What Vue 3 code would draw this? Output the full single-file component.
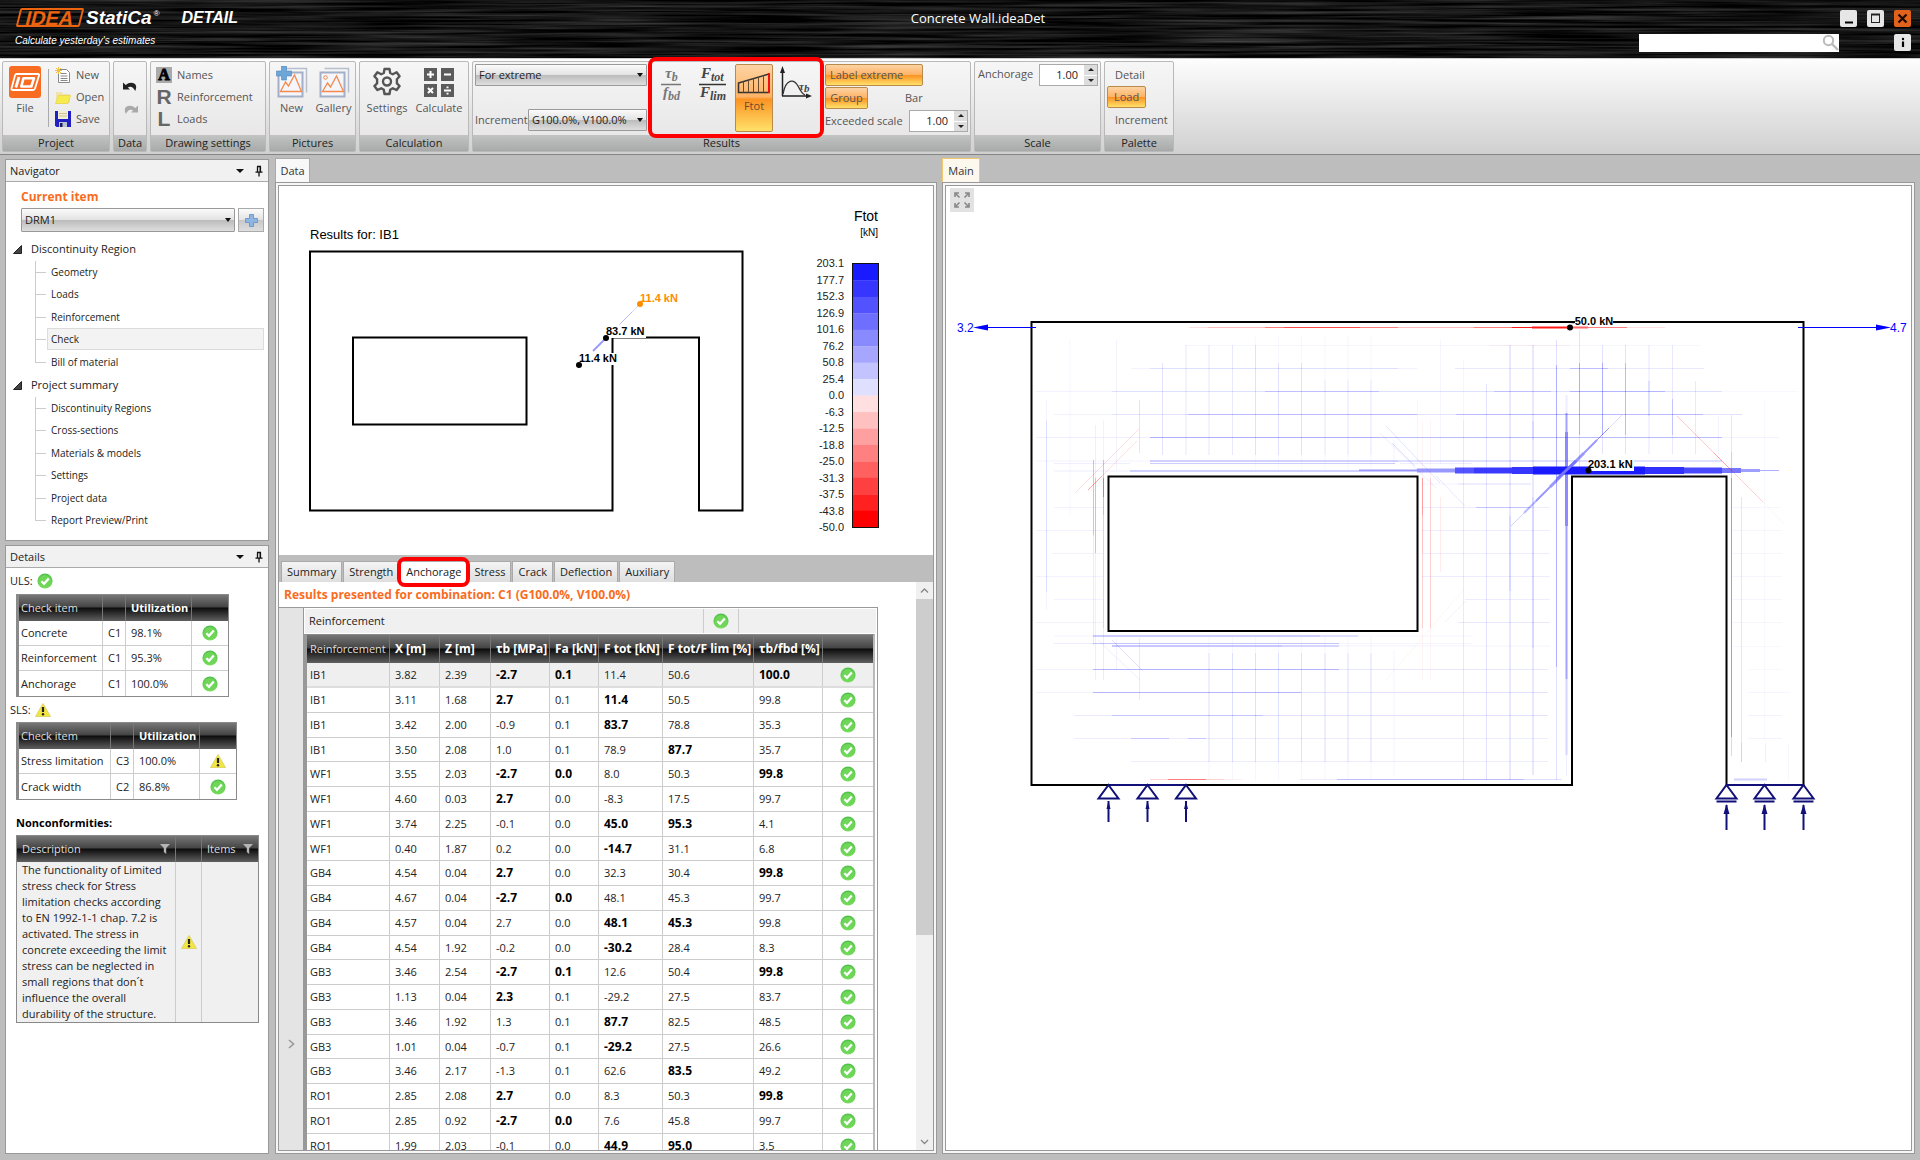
<script setup>
import { ref } from 'vue'

const member = ref('DRM1')
const extreme = ref('For extreme')
const increment = ref('G100.0%, V100.0%')

const tree = [
  { title: 'Discontinuity Region', items: ['Geometry', 'Loads', 'Reinforcement', 'Check', 'Bill of material'] },
  {
    title: 'Project summary',
    items: ['Discontinuity Regions', 'Cross-sections', 'Materials & models', 'Settings', 'Project data', 'Report Preview/Print']
  }
]

const uls = [
  ['Concrete', 'C1', '98.1%', 'ok'],
  ['Reinforcement', 'C1', '95.3%', 'ok'],
  ['Anchorage', 'C1', '100.0%', 'ok']
]
const sls = [
  ['Stress limitation', 'C3', '100.0%', 'warn'],
  ['Crack width', 'C2', '86.8%', 'ok']
]
const note = [
  'The functionality of Limited',
  'stress check for Stress',
  'limitation checks according',
  'to EN 1992-1-1 chap. 7.2 is',
  'activated. The stress in',
  'concrete exceeding the limit',
  'stress can be neglected in',
  'small regions that don´t',
  'influence the overall',
  'durability of the structure.'
].join('\n')

const tabs = ['Summary', 'Strength', 'Anchorage', 'Stress', 'Crack', 'Deflection', 'Auxiliary']

const columns = ['Reinforcement', 'X [m]', 'Z [m]', 'τb [MPa]', 'Fa [kN]', 'F tot [kN]', 'F tot/F lim [%]', 'τb/fbd [%]', '']

// A leading asterisk marks the extreme value of a bar group.
const rows = [
  'IB1 3.82 2.39 *-2.7 *0.1 11.4 50.6 *100.0',
  'IB1 3.11 1.68 *2.7 0.1 *11.4 50.5 99.8',
  'IB1 3.42 2.00 -0.9 0.1 *83.7 78.8 35.3',
  'IB1 3.50 2.08 1.0 0.1 78.9 *87.7 35.7',
  'WF1 3.55 2.03 *-2.7 *0.0 8.0 50.3 *99.8',
  'WF1 4.60 0.03 *2.7 0.0 -8.3 17.5 99.7',
  'WF1 3.74 2.25 -0.1 0.0 *45.0 *95.3 4.1',
  'WF1 0.40 1.87 0.2 0.0 *-14.7 31.1 6.8',
  'GB4 4.54 0.04 *2.7 0.0 32.3 30.4 *99.8',
  'GB4 4.67 0.04 *-2.7 *0.0 48.1 45.3 99.7',
  'GB4 4.57 0.04 2.7 0.0 *48.1 *45.3 99.8',
  'GB4 4.54 1.92 -0.2 0.0 *-30.2 28.4 8.3',
  'GB3 3.46 2.54 *-2.7 *0.1 12.6 50.4 *99.8',
  'GB3 1.13 0.04 *2.3 0.1 -29.2 27.5 83.7',
  'GB3 3.46 1.92 1.3 0.1 *87.7 82.5 48.5',
  'GB3 1.01 0.04 -0.7 0.1 *-29.2 27.5 26.6',
  'GB3 3.46 2.17 -1.3 0.1 62.6 *83.5 49.2',
  'RO1 2.85 2.08 *2.7 0.0 8.3 50.3 *99.8',
  'RO1 2.85 0.92 *-2.7 *0.0 7.6 45.8 99.7',
  'RO1 1.99 2.03 -0.1 0.0 *44.9 *95.0 3.5'
].map((line) => line.split(' ').map((v) => ({ text: v.replace('*', ''), bold: v[0] === '*' })))

const scale = ['203.1', '177.7', '152.3', '126.9', '101.6', '76.2', '50.8', '25.4', '0.0', '-6.3', '-12.5', '-18.8', '-25.0', '-31.3', '-37.5', '-43.8', '-50.0']
const shades = ['#1a1aff', '#3636ff', '#5252ff', '#6e6eff', '#8a8aff', '#a6a6ff', '#c3c3ff', '#dfdfff', '#ffdfdf', '#ffc0c0', '#ffa0a0', '#ff8080', '#ff6060', '#ff4040', '#ff2020', '#ff0000']

// Bars: [y, opacity, width, x1, x2]
const blueH = [
  [345.5, 0.04, 1, 1186, 1700],
  [368.5, 0.05, 1, 1131, 1150], [368.5, 0.14, 1, 1150, 1398], [368.5, 0.06, 1, 1398, 1417], [368.5, 0.1, 1, 1455, 1704], [368.5, 0.2, 1, 1570, 1608],
  [391.5, 0.05, 1, 1036, 1112], [391.5, 0.14, 1, 1112, 1722], [391.5, 0.16, 1, 1265, 1379], [391.5, 0.16, 1, 1494, 1551], [391.5, 0.22, 1, 1570, 1665], [391.5, 0.03, 1, 1722, 1798],
  [414.5, 0.06, 1, 1054, 1112], [414.5, 0.12, 1, 1112, 1742], [414.5, 0.2, 1, 1188, 1417], [414.5, 0.2, 1, 1456, 1703],
  [437.5, 0.07, 1, 1036, 1150], [437.5, 0.34, 1, 1150, 1379], [437.5, 0.3, 1, 1379, 1722], [437.5, 0.05, 1, 1722, 1779],
  [461, 0.06, 1, 1036, 1150], [461, 0.2, 2, 1150, 1398], [461, 0.14, 2, 1398, 1722],
  [463.5, 0.07, 1, 1054, 1130], [463.5, 0.22, 1, 1150, 1395], [463.5, 0.08, 1, 1400, 1472],
  [471, 0.08, 1, 1054, 1130], [471, 0.2, 2, 1130, 1359],
  [484, 0.15, 1, 1458, 1531], [484, 0.06, 1, 1422, 1458],
  [507.5, 0.05, 1, 1054, 1103], [507.5, 0.2, 1, 1476, 1530], [507.5, 0.08, 1, 1422, 1550], [507.5, 0.04, 1, 1732, 1780],
  [530.5, 0.06, 1, 1036, 1103], [530.5, 0.08, 1, 1422, 1550], [530.5, 0.04, 1, 1732, 1782],
  [553.5, 0.06, 1, 1052, 1103], [553.5, 0.08, 1, 1422, 1550], [553.5, 0.04, 1, 1732, 1782],
  [576.5, 0.05, 1, 1036, 1103], [576.5, 0.08, 1, 1422, 1550], [576.5, 0.04, 1, 1732, 1782],
  [599.5, 0.05, 1, 1054, 1103], [599.5, 0.08, 1, 1465, 1550], [599.5, 0.04, 1, 1732, 1782],
  [622.5, 0.06, 1, 1036, 1103], [622.5, 0.1, 1, 1458, 1550], [622.5, 0.04, 1, 1732, 1782],
  [636, 0.06, 1, 1054, 1093], [636, 0.22, 2, 1093, 1320], [636, 0.14, 2, 1320, 1358], [636, 0.04, 1, 1358, 1472],
  [643.5, 0.08, 1, 1054, 1093], [643.5, 0.26, 1, 1093, 1339], [643.5, 0.04, 1, 1339, 1472],
  [646, 0.24, 2, 1112, 1282], [646, 0.18, 2, 1282, 1339], [646, 0.06, 1, 1339, 1550],
  [669.5, 0.06, 1, 1036, 1093], [669.5, 0.32, 1, 1093, 1339], [669.5, 0.09, 1, 1339, 1548],
  [692.5, 0.06, 1, 1036, 1093], [692.5, 0.32, 1, 1093, 1301], [692.5, 0.12, 1, 1301, 1548],
  [715.5, 0.09, 1, 1074, 1112], [715.5, 0.26, 1, 1112, 1263], [715.5, 0.12, 1, 1263, 1548],
  [738.5, 0.08, 1, 1074, 1548], [738.5, 0.18, 1, 1131, 1169], [738.5, 0.18, 1, 1188, 1206],
  [761.5, 0.08, 1, 1131, 1548],
  [779.5, 0.08, 1, 1300, 1337], [779.5, 0.28, 1, 1337, 1524], [779.5, 0.14, 1, 1524, 1562], [779.5, 0.2, 2, 1734, 1767],
  [646.5, 0.03, 1, 1732, 1782], [669.5, 0.03, 1, 1748, 1782], [692.5, 0.04, 1, 1748, 1790], [715.5, 0.05, 1, 1748, 1782], [738.5, 0.05, 1, 1748, 1782]
]
// Bars: [x, opacity, width, y1, y2]
const blueV = [
  [1046.5, 0.1, 1, 421, 592], [1046.5, 0.05, 1, 400, 610],
  [1070, 0.04, 1, 340, 515],
  [1116.5, 0.05, 1, 340, 470], [1116.5, 0.06, 1, 638, 670],
  [1139.5, 0.12, 1, 400, 453], [1139.5, 0.09, 1, 638, 700],
  [1162.5, 0.12, 1, 363, 455],
  ...[1186, 1209, 1232.5, 1255.5].map((x) => [x, 0.1, 1, 345, 455]),
  ...[1278.5, 1301.5].map((x) => [x, 0.1, 1, 363, 455]),
  ...[1325, 1348, 1371].map((x) => [x, 0.08, 1, 380, 455]),
  ...[1255.5, 1278.5, 1301.5, 1325, 1348, 1371].map((x) => [x, 0.03, 1, 335, 470]),
  ...[1209, 1232.5, 1255.5, 1278.5, 1301.5, 1325, 1348, 1371].map((x) => [x, 0.1, 1, 653, 762]),
  ...[1209, 1232.5, 1255.5, 1278.5, 1301.5, 1325, 1348, 1371].map((x) => [x, 0.04, 1, 637, 780]),
  [1394, 0.06, 1, 650, 775], [1394, 0.06, 1, 440, 465],
  [1417.5, 0.04, 1, 400, 465],
  [1440.5, 0.04, 1, 340, 465],
  [1463.5, 0.1, 1, 420, 780], [1463.5, 0.04, 1, 360, 420],
  [1486.5, 0.12, 1, 384, 780],
  [1510, 0.1, 2, 345, 780], [1510, 0.16, 1, 516, 591],
  [1533, 0.1, 2, 345, 775], [1533, 0.14, 1, 421, 440], [1533, 0.14, 1, 497, 648],
  [1556.5, 0.24, 1, 365, 667], [1556.5, 0.14, 1, 340, 780],
  [1566.5, 0.08, 2, 395, 413], [1566.5, 0.4, 2, 413, 432], [1566.5, 0.5, 3, 432, 526], [1566.5, 0.4, 2, 526, 679], [1566.5, 0.18, 2, 679, 755], [1566.5, 0.08, 1, 755, 776],
  [1579.5, 0.12, 1, 330, 472], [1579.5, 0.26, 1, 363, 435],
  [1602.5, 0.12, 1, 345, 454], [1602.5, 0.26, 1, 363, 435],
  [1625.5, 0.12, 1, 345, 454], [1625.5, 0.2, 1, 363, 435],
  [1649, 0.1, 1, 345, 454], [1649, 0.18, 1, 381, 416],
  [1672.5, 0.1, 1, 345, 454], [1672.5, 0.18, 1, 399, 435],
  [1695.5, 0.1, 1, 381, 454], [1718.5, 0.05, 1, 416, 454],
  [1788.5, 0.04, 1, 743, 780], [1764.5, 0.03, 1, 400, 740]
]
const redH = [
  [327.5, 0.12, 1, 1189, 1208], [327.5, 0.25, 1, 1208, 1265], [327.5, 0.5, 1, 1265, 1284], [327.5, 0.7, 1, 1284, 1360], [327.5, 0.5, 1, 1360, 1398],
  [327.5, 0.25, 1, 1398, 1474], [327.5, 0.5, 1, 1474, 1512], [327.5, 0.9, 1, 1512, 1532], [327.5, 0.9, 2, 1532, 1570], [327.5, 0.6, 2, 1570, 1588],
  [327.5, 0.5, 1, 1588, 1627], [327.5, 0.12, 1, 1627, 1665], [345.5, 0.05, 1, 1490, 1570],
  [779.5, 0.18, 1, 1150, 1168], [779.5, 0.5, 1, 1168, 1206], [779.5, 0.18, 1, 1206, 1224], [779.5, 0.05, 1, 1224, 1243]
]
const redV = [
  [1093.5, 0.3, 1, 460, 535], [1093.5, 0.1, 1, 535, 645], [1095.5, 0.25, 1, 478, 553], [1095.5, 0.08, 1, 425, 680],
  [1103.5, 0.06, 1, 420, 460], [1103.5, 0.3, 1, 460, 478], [1103.5, 0.6, 1, 478, 497], [1103.5, 0.35, 1, 497, 515], [1103.5, 0.22, 1, 515, 628], [1103.5, 0.1, 1, 628, 680],
  [1422.5, 0.35, 1, 478, 515], [1422.5, 0.22, 1, 515, 553], [1422.5, 0.14, 1, 553, 628], [1422.5, 0.04, 1, 420, 680],
  [1430.5, 0.14, 1, 478, 628], [1430.5, 0.04, 1, 420, 680], [1440.5, 0.07, 1, 497, 572],
  [1731.5, 0.12, 1, 415, 452], [1731.5, 0.25, 1, 452, 478], [1731.5, 0.5, 1, 478, 737], [1731.5, 0.2, 1, 737, 756],
  [1741.5, 0.13, 1, 497, 743], [1741.5, 0.22, 1, 743, 762], [1765.5, 0.08, 1, 743, 762]
]
const band = [
  [1359, 1417, 2, 0.45], [1417, 1455, 4, 0.45], [1455, 1474, 6, 0.75], [1474, 1512, 6, 0.86], [1512, 1533, 7, 0.88], [1533, 1645, 8, 1],
  [1645, 1684, 7, 0.9], [1684, 1722, 6, 0.8], [1722, 1741, 5, 0.6], [1741, 1760, 3, 0.42], [1760, 1779, 1, 0.35]
]
// Diagonal bars: [x1, y1, x2, y2, width, opacity]
const blueD = [
  [1511, 526, 1524, 513, 1, 0.2], [1524, 513, 1536, 501, 2, 0.3], [1536, 501, 1550, 487, 2, 0.45], [1550, 487, 1584, 453, 3, 0.45],
  [1584, 453, 1597, 440, 2, 0.45], [1597, 440, 1609, 428, 1, 0.45], [1609, 428, 1622, 415, 1, 0.15],
  [1386, 426, 1440, 483, 1, 0.12], [1380, 433, 1436, 488, 1, 0.08], [1392, 443, 1415, 466, 1, 0.14], [1436, 476, 1465, 506, 1, 0.1],
  [1112, 640, 1142, 670, 1, 0.14], [1098, 640, 1140, 680, 1, 0.07], [1466, 601, 1445, 622, 1, 0.06]
]
const redD = [
  [1677, 416, 1714, 453, 1, 0.22], [1714, 453, 1732, 471, 1, 0.35], [1732, 471, 1763, 502, 1, 0.18], [1763, 502, 1784, 524, 1, 0.05],
  [1139, 429, 1075, 493, 1, 0.12], [1137, 441, 1102, 476, 1, 0.12], [1102, 476, 1088, 490, 1, 0.35], [1465, 588, 1386, 680, 1, 0.04]
]
const pins = [1108.5, 1147.5, 1186]
const rollers = [1726.5, 1764.5, 1803.5]
</script>

<template>
  <div class="app">
    <svg class="sprite" width="0" height="0" aria-hidden="true">
      <defs>
        <linearGradient id="okFill" x1="0" y1="0" x2="0" y2="1">
          <stop offset="0" stop-color="#4fbf4a" />
          <stop offset="1" stop-color="#7ade5c" />
        </linearGradient>
        <symbol id="ok" viewBox="0 0 16 16">
          <circle cx="8" cy="8" r="7.6" fill="url(#okFill)" />
          <circle cx="8" cy="8" r="6" fill="#6fd65a" />
          <path d="M4.4 8.2 7 10.8 11.8 5.4" fill="none" stroke="#fff" stroke-width="2.2" />
        </symbol>
        <symbol id="warn" viewBox="0 0 16 16">
          <path d="M8 1.5 15.5 14.5H.5Z" fill="#f3e544" stroke="#d9cf5a" stroke-width=".8" stroke-linejoin="round" />
          <path d="M8 5v5" stroke="#222" stroke-width="2.2" />
          <circle cx="8" cy="12.2" r="1.2" fill="#222" />
        </symbol>
        <symbol id="pin" viewBox="0 0 10 12">
          <path d="M3 1.5h4M3.5 1.5v5.5M1.5 7.2h7M5 7.2V11.5" fill="none" stroke="#111" stroke-width="1.3" />
          <path d="M6.3 1.5v5.5" stroke="#111" stroke-width="1.6" />
        </symbol>
        <symbol id="funnel" viewBox="0 0 12 12">
          <path d="M1 1h10L7.2 5v6L4.8 9V5Z" fill="#b5b5b5" />
        </symbol>
      </defs>
    </svg>

    <header class="top">
      <svg class="brushed" aria-hidden="true">
        <filter id="brush" x="0" y="0" width="100%" height="100%" color-interpolation-filters="sRGB">
          <feTurbulence type="fractalNoise" baseFrequency="0.006 0.35" numOctaves="3" seed="8" />
          <feColorMatrix values="0.4 0 0 0 -0.12  0.4 0 0 0 -0.12  0.4 0 0 0 -0.12  0 0 0 0 1" />
        </filter>
        <rect width="100%" height="100%" filter="url(#brush)" />
      </svg>
      <div class="brand">
        <div class="brand-row">
          <span class="idea"><span>IDEA</span></span>
          <span class="statica">StatiCa<sup>®</sup></span>
          <span class="product">DETAIL</span>
        </div>
        <div class="tagline">Calculate yesterday's estimates</div>
      </div>
      <div class="doc-title">Concrete Wall.ideaDet</div>
      <div class="top-right">
        <div class="win-row">
          <button class="win" aria-label="Minimize"><svg width="17" height="17"><path d="M5 12.5h8" stroke="#000" stroke-width="2" /></svg></button>
          <button class="win" aria-label="Maximize"><svg width="17" height="17"><rect x="4.5" y="4.5" width="8" height="8" fill="none" stroke="#222" /><path d="M4 4.5h9" stroke="#222" stroke-width="2" /></svg></button>
          <button class="win close" aria-label="Close"><svg width="17" height="17"><path d="M4.5 4.5l8 8M12.5 4.5l-8 8" stroke="#1a0a00" stroke-width="2.2" /></svg></button>
        </div>
        <div class="win-row">
          <div class="search">
            <input type="search" aria-label="Search" />
            <svg width="17" height="17" aria-hidden="true"><circle cx="6.5" cy="6.5" r="4.7" fill="none" stroke="#bbb" stroke-width="2" /><path d="M10 10l6 6" stroke="#bbb" stroke-width="2.4" /></svg>
          </div>
          <button class="win info" aria-label="Information"><svg width="17" height="17"><circle cx="9" cy="5" r="1.2" /><path d="M9 7.5V13" stroke="#000" stroke-width="2.2" /></svg></button>
        </div>
      </div>
    </header>

    <div class="ribbon">
      <section class="group g-project">
        <div class="body">
          <button class="big">
            <svg width="32" height="32" viewBox="0 0 32 32"><rect width="32" height="32" rx="3" fill="#f96b21" /><path d="M7.5 8h21.500q1.500 0 1 1.500l-4 13q-.500 1.500-2 1.500H3.500q-1.500 0-1-1.500l3.500-13Q6.500 8 7.500 8Z" fill="none" stroke="#fff" stroke-width="1.8" /><path d="M10 11 6.800 21.500" stroke="#fff" stroke-width="2.8" /><path d="M14.500 12.200h10.500L22.300 20.500h-10Z" fill="none" stroke="#fff" stroke-width="2.6" stroke-linejoin="round" /></svg>
            File
          </button>
          <div class="sep"></div>
          <div class="list">
            <button class="item"><svg width="16" height="16"><path d="M3.5 2.5h8l3 3v10h-11Z" fill="#fff" stroke="#888" /><path d="M5.5 6.5h6M5.5 9h7M5.5 11.5h7M5.5 13.5h7" stroke="#888" /><path d="M3.5 0v7M0 3.5h7M1 1l5 5M6 1 1 6" stroke="#f0c040" /></svg>New</button>
            <button class="item"><svg width="16" height="16"><path d="M1 3h6l1 2h7v9H1Z" fill="#f1e3b0" /><path d="M3.5 6.5h12L13 14.5H.5Z" fill="#f7ec4e" stroke="#e8d95a" /></svg>Open</button>
            <button class="item"><svg width="16" height="16"><path d="M0 0h16v16H1.5L0 14.5Z" fill="#2020c4" /><path d="M3 0h10v8H3Z" fill="#f4efce" /><path d="M4 2.5h8M4 5h8" stroke="#c9c29a" /><path d="M4 11h8v5H4Z" fill="#b9c2d0" /><path d="M5 12h2.5v4H5Z" fill="#1a1a60" /></svg>Save</button>
          </div>
        </div>
        <footer>Project</footer>
      </section>

      <section class="group g-data">
        <div class="body stack">
          <button aria-label="Undo"><svg width="15" height="12"><path d="M0 1.5v7h7L4.8 6.5Q9 4 12.3 10 15 3.5 10 2 6 1 2.7 4Z" fill="#222" /></svg></button>
          <button aria-label="Redo"><svg width="15" height="12"><path d="M15 1.5v7H8L10.2 6.5Q6 4 2.7 10 0 3.5 5 2 9 1 12.3 4Z" fill="#a9a9a9" /></svg></button>
        </div>
        <footer>Data</footer>
      </section>

      <section class="group g-drawing">
        <div class="body">
          <div class="list">
            <button class="item"><b class="letter boxed">A</b>Names</button>
            <button class="item"><b class="letter">R</b>Reinforcement</button>
            <button class="item"><b class="letter">L</b>Loads</button>
          </div>
        </div>
        <footer>Drawing settings</footer>
      </section>

      <section class="group g-pictures">
        <div class="body pair">
          <button class="big">
            <svg width="32" height="32"><path d="M6.5 2.5h24v24" fill="none" stroke="#b6bfd0" stroke-width="1.5" /><rect x="2.5" y="6.5" width="24" height="24" fill="#f4f6fb" stroke="#a3afc6" stroke-width="2" /><path d="M4.5 25.5 9.5 16l3 4L18.5 9l7 16.5Z" fill="none" stroke="#f58a4b" stroke-width="1.3" /><path d="M5.5 0h5v5h5v5h-5v4h-5v-4h-5V5h5Z" fill="#6fa6d8" stroke="#4a86bd" stroke-width=".6" /></svg>
            New
          </button>
          <button class="big">
            <svg width="32" height="32"><path d="M6.5 2.5h24v24" fill="none" stroke="#b6bfd0" stroke-width="1.5" /><rect x="2.5" y="6.5" width="24" height="24" fill="#f4f6fb" stroke="#a3afc6" stroke-width="2" /><path d="M4.5 25.5 9.5 17l3 4 6-11 7 15.5Z" fill="none" stroke="#f58a4b" stroke-width="1.3" /><circle cx="7.5" cy="11.5" r="1.8" fill="none" stroke="#f58a4b" /></svg>
            Gallery
          </button>
        </div>
        <footer>Pictures</footer>
      </section>

      <section class="group g-calc">
        <div class="body pair">
          <button class="big">
            <svg width="32" height="32" viewBox="0 0 32 32"><path d="M13.5 3h5l.7 4 2.6 1.3 3.8-2 3 4-2.7 3v4l2.7 2.7-3 4-3.8-1.7-2.6 1.5-.7 4.2h-5l-.7-4.2-2.6-1.5L6.4 24l-3-4 2.7-2.7v-4l-2.7-3 3-4 3.8 2L12.8 7Z" fill="none" stroke="#555" stroke-width="2.4" stroke-linejoin="round" /><circle cx="16" cy="15.5" r="4" fill="none" stroke="#555" stroke-width="2.4" /></svg>
            Settings
          </button>
          <button class="big">
            <svg width="32" height="32"><g fill="#5c5c5c"><path d="M1 2h13v13H1ZM18 2h13v13H18ZM1 18h13v13H1ZM18 18h13v13H18Z" /></g><g stroke="#fff" stroke-width="2"><path d="M4 8.5h7M7.5 5v7M21 8.5h7M5 22l5 5M10 22l-5 5M21 24.5h7M24.5 20.5v1.8M24.5 26.8v1.8" /></g></svg>
            Calculate
          </button>
        </div>
        <footer>Calculation</footer>
      </section>

      <section class="group g-results">
        <div class="body">
          <div class="selects">
            <span class="pick">
              <select v-model="extreme" aria-label="Result extreme"><option>For extreme</option></select>
            </span>
            <div class="inc-row">
              <label for="increment">Increment</label>
              <span class="pick"><select id="increment" v-model="increment"><option>G100.0%, V100.0%</option></select></span>
            </div>
          </div>
          <div class="types">
            <button aria-label="Bond stress utilization">
              <svg width="24" height="40" class="math grey"><text x="5" y="12">τ<tspan dy="3" class="sub">b</tspan></text><path d="M1 18.5h20" stroke="#777" stroke-width="1.5" /><text x="3" y="31">f<tspan dy="3" class="sub">bd</tspan></text></svg>
            </button>
            <button aria-label="Force utilization">
              <svg width="30" height="40" class="math"><text x="3" y="12">F<tspan dy="3" class="sub">tot</tspan></text><path d="M1 18.5h27" stroke="#333" stroke-width="1.5" /><text x="2" y="31">F<tspan dy="3" class="sub">lim</tspan></text></svg>
            </button>
            <button class="hot ftot">
              <svg width="34" height="31"><path d="M1.5 16 32 7v18.5H1.5Z" fill="none" stroke="#333" stroke-width="1.5" /><path d="M6.5 14.5v11M11.500 13v12.500M16.500 11.500v14M21.500 10v15.500M26.500 8.500v17" stroke="#6b4a2a" /><path d="M32 6v20" stroke="#f01010" stroke-width="2" /></svg>
              Ftot
            </button>
            <button aria-label="Bond stress diagram">
              <svg width="33" height="34" class="math"><path d="M3.5 30V4M3 30h26" fill="none" stroke="#222" stroke-width="1.5" /><path d="M3.5 0 6 7H1ZM33 30l-6 2.5v-5Z" fill="#222" /><path d="M4 28C7 12 15 13 19 20q4 8 7 9" fill="none" stroke="#333" stroke-width="1.3" /><text x="20" y="24" class="small">τ<tspan dy="2">b</tspan></text></svg>
            </button>
          </div>
          <div class="labels">
            <button class="hot">Label extreme</button>
            <div class="row"><button class="hot">Group</button><button class="plain">Bar</button></div>
            <div class="row">
              <label for="exceeded">Exceeded scale</label>
              <span class="spin"><input id="exceeded" type="text" value="1.00" /><i><b></b><b></b></i></span>
            </div>
          </div>
        </div>
        <footer>Results</footer>
      </section>

      <section class="group g-scale">
        <div class="body">
          <label for="anchorage">Anchorage</label>
          <span class="spin"><input id="anchorage" type="text" value="1.00" /><i><b></b><b></b></i></span>
        </div>
        <footer>Scale</footer>
      </section>

      <section class="group g-palette">
        <div class="body">
          <button class="plain">Detail</button>
          <button class="hot">Load</button>
          <button class="plain">Increment</button>
        </div>
        <footer>Palette</footer>
      </section>
    </div>

    <main class="work">
      <aside class="side">
        <section class="dock navigator">
          <h2>Navigator <span class="tools"><i class="down"></i><svg width="10" height="12"><use href="#pin" /></svg></span></h2>
          <div class="current">
            <label for="member">Current item</label>
            <div class="row">
              <span class="pick"><select id="member" v-model="member"><option>DRM1</option></select></span>
              <button class="add" aria-label="Add item"><svg width="13" height="13"><path d="M4.5.5h4v4h4v4h-4v4h-4v-4h-4v-4h4Z" fill="#8fb6e0" stroke="#6d9bcf" /></svg></button>
            </div>
          </div>
          <div v-for="g in tree" :key="g.title" class="branch">
            <div class="root"><svg width="9" height="9" aria-hidden="true"><path d="M8.5.5v8h-8Z" fill="#444" stroke="#222" /></svg>{{ g.title }}</div>
            <ul>
              <li v-for="t in g.items" :key="t"><a href="#" :class="{ active: t === 'Check' }">{{ t }}</a></li>
            </ul>
          </div>
        </section>

        <section class="dock details">
          <h2>Details <span class="tools"><i class="down"></i><svg width="10" height="12"><use href="#pin" /></svg></span></h2>
          <div class="state">ULS: <svg width="16" height="16"><use href="#ok" /></svg></div>
          <table class="grid uls">
            <thead><tr><th>Check item</th><th></th><th class="b">Utilization</th><th></th></tr></thead>
            <tbody>
              <tr v-for="r in uls" :key="r[0]"><td>{{ r[0] }}</td><td>{{ r[1] }}</td><td>{{ r[2] }}</td><td class="c"><svg width="16" height="16"><use :href="'#' + r[3]" /></svg></td></tr>
            </tbody>
          </table>
          <div class="state">SLS: <svg width="16" height="16"><use href="#warn" /></svg></div>
          <table class="grid sls">
            <thead><tr><th>Check item</th><th></th><th class="b">Utilization</th><th></th></tr></thead>
            <tbody>
              <tr v-for="r in sls" :key="r[0]"><td>{{ r[0] }}</td><td>{{ r[1] }}</td><td>{{ r[2] }}</td><td class="c"><svg width="16" height="16"><use :href="'#' + r[3]" /></svg></td></tr>
            </tbody>
          </table>
          <h3>Nonconformities:</h3>
          <table class="grid non">
            <thead><tr><th><span>Description<svg width="12" height="12"><use href="#funnel" /></svg></span></th><th></th><th><span>Items<svg width="12" height="12"><use href="#funnel" /></svg></span></th></tr></thead>
            <tbody><tr><td class="note">{{ note }}</td><td class="c"><svg width="16" height="16"><use href="#warn" /></svg></td><td></td></tr></tbody>
          </table>
        </section>
      </aside>

      <section class="doc data">
        <div class="doc-tabs"><button class="doc-tab">Data</button></div>
        <div class="frame">
          <div class="inner">
            <svg class="plot small-plot" aria-label="Results for IB1">
              <g transform="translate(-279 -186)">
                <text x="310" y="239" font-size="13">Results for: IB1</text>
                <text x="878" y="221" font-size="14" text-anchor="end">Ftot</text>
                <text x="878" y="236" font-size="10" text-anchor="end">[kN]</text>
                <rect v-for="(c, i) in shades" :key="c" x="852" :y="264 + i * 16.45" width="27" height="16.7" :fill="c" />
                <rect x="852.5" y="263.5" width="26" height="264" fill="none" stroke="#111" />
                <text v-for="(t, i) in scale" :key="t" x="844" :y="267 + i * 16.5" font-size="11" text-anchor="end" fill="#222">{{ t }}</text>
                <path d="M310 251.5H742.5V510.5H699V337.5H612.5V510.5H310ZM353 337.5H526.5V424.5H353Z" fill="none" stroke="#000" stroke-width="2" />
                <path d="M640 304 593 351" stroke="#d8d8ff" />
                <path d="M620 324 632 312" stroke="#b8b8ff" />
                <path d="M606 338 593 351" stroke="#9c9cff" stroke-width="2" />
                <g fill="#fff"><rect x="606" y="325" width="40" height="13" /><rect x="580" y="353" width="38" height="12" /></g>
                <g fill="#ff8c00"><circle cx="640" cy="304" r="3" /><text x="640" y="302" class="tag">11.4 kN</text></g>
                <circle cx="606" cy="338" r="3" /><text x="606" y="335" class="tag">83.7 kN</text>
                <circle cx="579" cy="365" r="3" /><text x="579" y="362" class="tag">11.4 kN</text>
              </g>
            </svg>
            <div class="tabs">
              <button v-for="t in tabs" :key="t" :class="{ on: t === 'Anchorage' }">{{ t }}</button>
            </div>
            <div class="results">
              <div class="scroll">
                <p class="headline">Results presented for combination: C1 (G100.0%, V100.0%)</p>
                <div class="master">
                  <div class="gutter"><svg width="9" height="12" aria-hidden="true"><path d="M2 2l4.5 4L2 10" fill="none" stroke="#999" stroke-width="1.6" /></svg></div>
                  <div class="master-body">
                    <div class="head-row"><span>Reinforcement</span><span class="mark"><svg width="16" height="16"><use href="#ok" /></svg></span><span></span></div>
                    <table class="grid bars">
                      <colgroup><col v-for="(c, i) in columns" :key="c" :class="'c' + i" /></colgroup>
                      <thead><tr><th v-for="(c, i) in columns" :key="c" :class="{ b: i > 0 }">{{ c }}</th></tr></thead>
                      <tbody>
                        <tr v-for="(r, i) in rows" :key="i">
                          <td v-for="(v, j) in r" :key="j" :class="{ b: v.bold }">{{ v.text }}</td>
                          <td class="c"><svg width="16" height="16"><use href="#ok" /></svg></td>
                        </tr>
                      </tbody>
                    </table>
                  </div>
                </div>
              </div>
              <div class="bar" aria-hidden="true">
                <svg width="17" height="17"><path d="M5 10.5 8.5 7l3.5 3.5" fill="none" stroke="#888" stroke-width="1.3" /></svg>
                <div class="thumb"></div>
                <svg width="17" height="17"><path d="M5 7l3.5 3.5L12 7" fill="none" stroke="#888" stroke-width="1.3" /></svg>
              </div>
            </div>
          </div>
        </div>
      </section>

      <section class="doc view">
        <div class="doc-tabs"><button class="doc-tab focus">Main</button></div>
        <div class="frame">
          <div class="inner">
            <svg class="plot big-plot" aria-label="Wall reinforcement forces">
              <g transform="translate(-946 -186)">
                <g stroke="#1a1aff">
                  <path v-for="(b, i) in blueH" :key="'h' + i" :d="`M${b[3]} ${b[0]}H${b[4]}`" :stroke-opacity="b[1]" :stroke-width="b[2]" />
                  <path v-for="(b, i) in blueV" :key="'v' + i" :d="`M${b[0]} ${b[3]}V${b[4]}`" :stroke-opacity="b[1]" :stroke-width="b[2]" />
                  <path v-for="(b, i) in band" :key="'b' + i" :d="`M${b[0]} 470.5H${b[1]}`" :stroke-width="b[2]" :stroke-opacity="b[3]" />
                  <path v-for="(b, i) in blueD" :key="'d' + i" :d="`M${b[0]} ${b[1]}L${b[2]} ${b[3]}`" :stroke-width="b[4]" :stroke-opacity="b[5]" />
                </g>
                <path d="M1557 479 1576 461" stroke="#7474ff" stroke-width="3" />
                <g stroke="#ff0000">
                  <path v-for="(b, i) in redH" :key="'h' + i" :d="`M${b[3]} ${b[0]}H${b[4]}`" :stroke-opacity="b[1]" :stroke-width="b[2]" />
                  <path v-for="(b, i) in redV" :key="'v' + i" :d="`M${b[0]} ${b[3]}V${b[4]}`" :stroke-opacity="b[1]" :stroke-width="b[2]" />
                  <path v-for="(b, i) in redD" :key="'d' + i" :d="`M${b[0]} ${b[1]}L${b[2]} ${b[3]}`" :stroke-width="b[4]" :stroke-opacity="b[5]" />
                </g>
                <path d="M1031.5 322H1803.5V785H1726.5V476.5H1572V785H1031.5ZM1108.5 476.5H1417.5V631H1108.5Z" fill="none" stroke="#000" stroke-width="2" />
                <g stroke="#0000ff" fill="#0000ff" class="force">
                  <path d="M1036 327.5H985M1798 327.5H1880" />
                  <path d="M973 327.5l15-3v6ZM1891 327.5l-15-3v6Z" stroke="none" />
                  <text x="957" y="332" stroke="none">3.2</text>
                  <text x="1890" y="332" stroke="none">4.7</text>
                </g>
                <g fill="#fff"><rect x="1575" y="316" width="38" height="10" /><rect x="1589" y="459" width="45" height="12" /></g>
                <circle cx="1570" cy="327.5" r="3" /><text x="1571" y="325" class="tag">-50.0 kN</text>
                <circle cx="1588.5" cy="470.5" r="3" /><text x="1588" y="468" class="tag">203.1 kN</text>
                <g fill="none" stroke="#101078" stroke-width="2">
                  <path d="M1108 785H1187M1726 785H1804" />
                  <g v-for="x in pins" :key="x">
                    <path :d="`M${x} 785l10 13.5h-20Z`" stroke-width="2" />
                    <path :d="`M${x} 801v21`" stroke-width="2" /><path :d="`M${x} 801l2 8h-4Z`" fill="#101078" stroke="none" />
                  </g>
                  <g v-for="x in rollers" :key="x">
                    <path :d="`M${x} 785l10 13.5h-20ZM${x - 10} 801.5h20`" stroke-width="2" />
                    <path :d="`M${x} 805v25`" stroke-width="2" /><path :d="`M${x} 804l3 10h-6Z`" fill="#101078" stroke="none" />
                  </g>
                </g>
              </g>
            </svg>
            <button class="fit" aria-label="Zoom to fit"><svg width="24" height="24"><g fill="none" stroke="#888" stroke-width="1.6"><path d="M5 9V5h4M5 5l4.5 4.5M15 5h4v4M19 5l-4.5 4.5M5 15v4h4M5 19l4.5-4.5M19 15v4h-4M19 19l-4.5-4.5" /></g></svg></button>
          </div>
        </div>
      </section>
    </main>
  </div>
</template>

<style>
body { background: #bdbdbd; overflow: hidden; }
</style>

<style scoped>
* { box-sizing: border-box; }
.app { height: 100vh; display: flex; flex-direction: column; font: 11px/16px 'Open Sans', 'Noto Sans', sans-serif; color: #222; background: #bdbdbd; }
.sprite { display: block; }
button, input, select { font: inherit; color: inherit; margin: 0; padding: 0; border: 0; background: none; border-radius: 0; }
svg { display: block; flex: none; }
h2, h3, p, ul { margin: 0; padding: 0; font: inherit; }

.top { position: relative; height: 58px; flex: none; background: #0c0c0c; color: #fff; display: grid; grid-template-columns: 1fr auto 1fr; overflow: hidden; }
.brushed { position: absolute; inset: 0; width: 100%; height: 100%; }
.brand, .doc-title, .top-right { position: relative; }
.brand { padding: 7px 0 0 15px; font-family: 'Liberation Sans', sans-serif; font-style: italic; white-space: nowrap; }
.brand-row { display: flex; align-items: center; height: 21px; }
.idea { width: 64px; height: 19px; margin-left: 3px; border: 2px solid #ec6310; border-radius: 2px; transform: skewX(-14deg); display: flex; align-items: center; justify-content: center; font: bold 20px/16px 'Liberation Sans', sans-serif; color: #ec6310; }
.statica { margin-left: 4px; font-size: 19px; font-weight: bold; }
.statica sup { font-size: 8px; font-weight: normal; vertical-align: 8px; line-height: 0; margin-left: 2px; }
.product { margin-left: 22px; font-size: 16px; font-weight: bold; }
.tagline { font-size: 10px; line-height: 12px; margin-top: 7px; }
.doc-title { font-size: 13px; padding: 10px 0 0 36px; }
.top-right { justify-self: end; padding: 10px 9px 0 0; display: flex; flex-direction: column; gap: 7px; align-items: flex-end; }
.win-row { display: flex; gap: 10px; }
.win { width: 17px; height: 17px; background: #e6e6e6; border-radius: 2px; }
.close { background: #e0621c; }
.search { display: flex; width: 200px; height: 18px; background: #fff; margin-right: 45px; }
.search input { flex: 1; min-width: 0; outline: none; appearance: none; }

.ribbon { flex: none; display: flex; gap: 3px; height: 97px; padding: 2px 2px; background: linear-gradient(#fdfdfd, #d0d0d0); border-bottom: 1px solid #858585; border-top: 1px solid #ccc; color: #555; }
.group { display: flex; flex-direction: column; height: 91px; border: 1px solid #b9b9b9; border-radius: 2px; background: linear-gradient(#f6f6f6, #e6e4e4); flex: none; }
.group footer { height: 16px; line-height: 16px; text-align: center; background: linear-gradient(#c1c4c2, #a7aaa8); color: #222; }
.body { flex: 1; display: flex; min-height: 0; }
.g-project { width: 108px; } .g-data { width: 34px; } .g-drawing { width: 116px; } .g-pictures { width: 87px; } .g-calc { width: 110px; }
.g-results { width: 499px; } .g-scale { width: 127px; } .g-palette { width: 70px; }
.big { display: flex; flex-direction: column; align-items: center; width: 42px; padding-top: 4px; height: 62px; white-space: nowrap; }
.big svg { margin-bottom: 2px; }
.g-project .big { margin-left: 1px; }
.sep { width: 1px; height: 58px; background: #aaa; margin: 7px 6px 0 2px; }
.list { display: flex; flex-direction: column; padding-top: 2px; }
.item { display: flex; align-items: center; gap: 5px; height: 22px; text-align: left; white-space: nowrap; }
.g-drawing .list { padding-left: 5px; }
.letter { width: 16px; height: 16px; font: bold 21px/16px 'Liberation Sans', sans-serif; color: #666; text-align: center; }
.letter.boxed { background: #aaa; color: #000; font: bold 16px/16px 'Liberation Serif', serif; -webkit-text-stroke: 1px #000; }
.stack { flex-direction: column; align-items: center; gap: 11px; padding-top: 19px; }
.pair { justify-content: center; }
.g-calc .pair { justify-content: flex-start; padding-left: 1px; }
.g-calc .big { width: 52px; }

.pick { position: relative; display: flex; min-width: 0; flex: 1; }
.pick select { appearance: none; flex: 1; min-width: 0; height: 22px; padding: 0 3px; border: 1px solid #9a9a9a; background: linear-gradient(#fbfbfb, #e3e3e3 48%, #bcbcbc 52%, #dedede); color: #222; border-radius: 1px; }
.pick::after { content: ''; position: absolute; right: 4px; top: 9px; border: 3px solid transparent; border-top: 4px solid #111; border-bottom: 0; pointer-events: none; }
.selects { width: 172px; margin: 2px 0 0 2px; display: flex; flex-direction: column; gap: 23px; }
.selects > .pick { flex: none; }
.inc-row { display: flex; align-items: center; }
.inc-row label { width: 53px; }
.types { position: relative; width: 173px; margin-left: 1px; display: flex; padding: 2px 0 0 12px; align-items: flex-start; gap: 12px; }
.types::before { content: ''; position: absolute; left: 0; right: -3px; top: -5px; height: 73px; border: 4px solid #f00; border-radius: 8px; z-index: 2; pointer-events: none; }
.types button { padding-top: 2px; }
.types button + button { margin-left: 2px; }
.types .ftot { width: 38px; height: 68px; display: flex; flex-direction: column; align-items: center; margin-left: -5px; }
.types .ftot + button { margin-left: -6px; }
.math { font: italic bold 15px 'Liberation Serif', serif; fill: #444; overflow: visible; }
.math.grey { fill: #777; }
.math .sub { font-size: 12px; }
.math .small { font-size: 11px; }
.hot { border: 1px solid #b98a4a; border-radius: 2px; background: linear-gradient(#fcd3a3, #ffb366 48%, #fb9324 52%, #ffe169); color: #555; white-space: nowrap; }
.ftot.hot { color: #6b4a2a; }
.labels { flex: 1; display: flex; flex-direction: column; align-items: flex-start; padding: 2px 2px 0 4px; gap: 1px; }
.labels > .hot { width: 98px; height: 22px; text-align: left; padding-left: 4px; }
.row { display: flex; align-items: center; align-self: stretch; height: 22px; }
.labels .row .hot { width: 43px; height: 22px; }
.labels .row .plain { margin-left: 37px; }
.labels .row label { flex: 1; white-space: nowrap; }
.spin { display: flex; width: 59px; height: 22px; border: 1px solid #aaa; background: #fff; }
.spin input { flex: 1; min-width: 0; width: 40px; text-align: right; padding-right: 6px; color: #222; }
.spin i { width: 13px; display: flex; flex-direction: column; gap: 1px; }
.spin b { flex: 1; background: #ddd; display: flex; align-items: center; justify-content: center; }
.spin b::after { content: ''; border: 3px solid transparent; border-bottom-color: #222; border-top: 0; }
.spin b + b::after { border-top: 3px solid #222; border-bottom: 0; }
.g-scale .body { padding: 2px 2px 0 3px; justify-content: space-between; line-height: 20px; }
.g-palette .body { flex-direction: column; align-items: flex-start; padding: 1px 2px; }
.g-palette button { height: 23px; padding: 0 8px; }
.g-palette .hot { height: 22px; padding: 0 6px; }

.work { flex: 1; min-height: 0; display: flex; padding: 3px 5px 6px 5px; }
.side { width: 264px; flex: none; display: flex; flex-direction: column; gap: 4px; padding-top: 1px; margin-right: 6px; }
.dock { background: #fff; border: 1px solid #999; }
.dock h2 { height: 22px; line-height: 21px; padding: 0 4px 0 4px; background: #f1f1f1; border-bottom: 1px solid #aaa; display: flex; justify-content: space-between; }
.tools { display: flex; align-items: center; gap: 10px; }
.down { border: 4px solid transparent; border-top-color: #111; border-bottom: 0; }
.navigator { height: 382px; flex: none; }
.details { flex: 1; min-height: 0; overflow: hidden; }
.current { padding: 6px 4px 0 15px; }
.current label { color: #f96b21; font-weight: bold; font-size: 12px; display: block; line-height: 18px; }
.current .row { gap: 3px; height: 24px; margin-top: 2px; }
.current select { height: 24px; }
.current .pick::after { top: 10px; }
.add { width: 26px; height: 24px; border: 1px solid #aaa; background: linear-gradient(#fbfbfb, #e3e3e3 48%, #c8c8c8 52%, #dedede); display: flex; align-items: center; justify-content: center; }
.branch { padding: 0 4px 0 7px; }
.current + .branch { margin-top: 5px; }
.root { display: flex; align-items: center; gap: 9px; height: 24px; }
.branch ul { list-style: none; margin-left: 22px; font-size: 10px; }
.branch li { position: relative; height: 22px; padding-left: 11px; border-left: 1px solid #ccc; }
.branch li:nth-child(even) { height: 23px; }
.branch li::before { content: ''; position: absolute; left: 0; top: 11px; width: 10px; border-top: 1px solid #ccc; }
.branch li:last-child::after { content: ''; position: absolute; left: -1px; top: 12px; bottom: 0; width: 1px; background: #fff; }
.branch li a { display: block; height: 22px; line-height: 20px; padding-left: 3px; border: 1px solid transparent; color: #222; text-decoration: none; }
.branch li a.active { background: #f3f3f3; border-color: #dcdcdc; }
.state { display: flex; align-items: center; gap: 4px; height: 26px; padding-left: 4px; }
.uls + .state { height: 25px; }

.grid { border-collapse: separate; border-spacing: 0; border: 1px solid #8a8a8a; table-layout: fixed; }
.grid th { height: 26px; padding: 0 0 0 5px; text-align: left; font-weight: normal; color: #ddd; white-space: nowrap; background: linear-gradient(#777, #444 46%, #0c0c0c 50%, #606060); border-right: 1px solid #777; }
.grid th.b { font-weight: bold; color: #fff; }
.grid td { height: 25px; padding: 0 0 0 5px; border-right: 1px solid #ccc; border-bottom: 1px solid #ccc; white-space: nowrap; }
.grid tr > :last-child { border-right: 0; }
.grid td.c { padding: 0; }
.grid td.c svg { margin: 0 auto; }
.grid td.b { font-weight: bold; color: #000; }
.details .grid { margin-left: 10px; }
.details .grid tbody tr:last-child td { border-bottom: 0; }
.uls, .sls { border-left: 3px solid #8a8a8a; }
.uls { width: 213px; } .sls { width: 221px; } .non { width: 243px; }
.uls th:nth-child(1) { width: 84px; padding-left: 2px; } .sls th:nth-child(1) { width: 92px; padding-left: 2px; }
.uls td:nth-child(1), .sls td:nth-child(1) { padding-left: 2px; }
.uls th:nth-child(2), .sls th:nth-child(2) { width: 23px; }
.uls th:nth-child(3), .sls th:nth-child(3) { width: 66px; }
.details h3 { font-weight: bold; color: #000; padding: 15px 0 4px 10px; }
.non th:nth-child(1) { width: 159px; } .non th:nth-child(2) { width: 26px; }
.non th span { display: flex; justify-content: space-between; align-items: center; padding-right: 4px; }
.non td { background: #f0f0f0; }
.details .non td.note { white-space: pre; line-height: 16px; padding: 0 0 0 5px; }

.doc { display: flex; flex-direction: column; min-width: 0; }
.data { width: 662px; flex: none; margin-right: 5px; }
.view { flex: 1; }
.doc-tabs { height: 24px; flex: none; display: flex; }
.doc-tab { width: 35px; background: #f8f8f8; border: 1px solid #aaa; border-bottom: 0; color: #333; }
.doc-tab.focus { width: 38px; background: #fdf8ee; border-color: #f0c870; }
.frame { flex: 1; min-height: 0; display: flex; border: 1px solid #999; background: #f6f6f6; padding: 2px; }
.inner { position: relative; flex: 1; min-width: 0; display: flex; flex-direction: column; background: #fff; border: 1px solid #999; }
.plot { width: 100%; font-family: 'Liberation Sans', sans-serif; }
.small-plot { height: 369px; flex: none; }
.big-plot { flex: 1; }
.tag { font-weight: bold; font-size: 11px; }
.force text { font-size: 12px; }
.fit { position: absolute; left: 4px; top: 2px; width: 24px; height: 24px; background: #e2e2e2; }

.tabs { height: 27px; flex: none; background: #bdbdbd; padding: 6px 0 0 2px; display: flex; gap: 1px; }
.tabs button { position: relative; padding: 0 5px; height: 21px; background: linear-gradient(#f4f4f4, #dedede); border: 1px solid #aaa; border-bottom: 0; }
.tabs .on { background: #fff; padding: 0 5px; }
.tabs .on::after { content: ''; position: absolute; inset: -5px -4px -5px; border: 4px solid #f00; border-radius: 8px; z-index: 1; }
.results { flex: 1; min-height: 0; display: flex; }
.scroll { flex: 1; overflow: hidden; }
.headline { color: #f96b21; font-size: 12px; font-weight: bold; padding: 5px 0 4px 5px; }
.master { display: flex; width: 599px; border-top: 1px solid #999; border-right: 1px solid #999; }
.gutter { width: 25px; background: #e4e4e4; border-right: 1px solid #999; padding: 430px 0 0 8px; }
.master-body { flex: 1; min-width: 0; }
.head-row { display: grid; grid-template-columns: 1fr 35px 137px; height: 26px; background: #f0f0f0; border: 1px solid #fff; line-height: 24px; }
.head-row span { border-right: 1px solid #ccc; padding-left: 4px; }
.head-row span:last-child { border-right: 0; }
.head-row .mark { padding: 4px 0 0 9px; }
.bars { width: 571px; border-left: 3px solid #999; border-right: 2px solid #bbb; }
.bars th { height: 28px; }
.bars th.b, .bars td.b { font-size: 12px; }
.bars tr:nth-child(4n) td { height: 24px; }
.bars tbody tr:first-child td { background: #efefef; border-bottom: 2px solid #ddd; }
.bars th:first-child, .bars td:first-child { padding-left: 3px; }
.c0 { width: 83px; } .c1 { width: 50px; } .c2 { width: 51px; } .c3 { width: 59px; } .c4 { width: 49px; } .c5 { width: 64px; } .c6 { width: 91px; } .c7 { width: 69px; }
.bar { width: 17px; background: #f0f0f0; display: flex; flex-direction: column; }
.thumb { height: 336px; background: #cdcdcd; }
.bar svg:last-child { margin-top: auto; }
</style>
